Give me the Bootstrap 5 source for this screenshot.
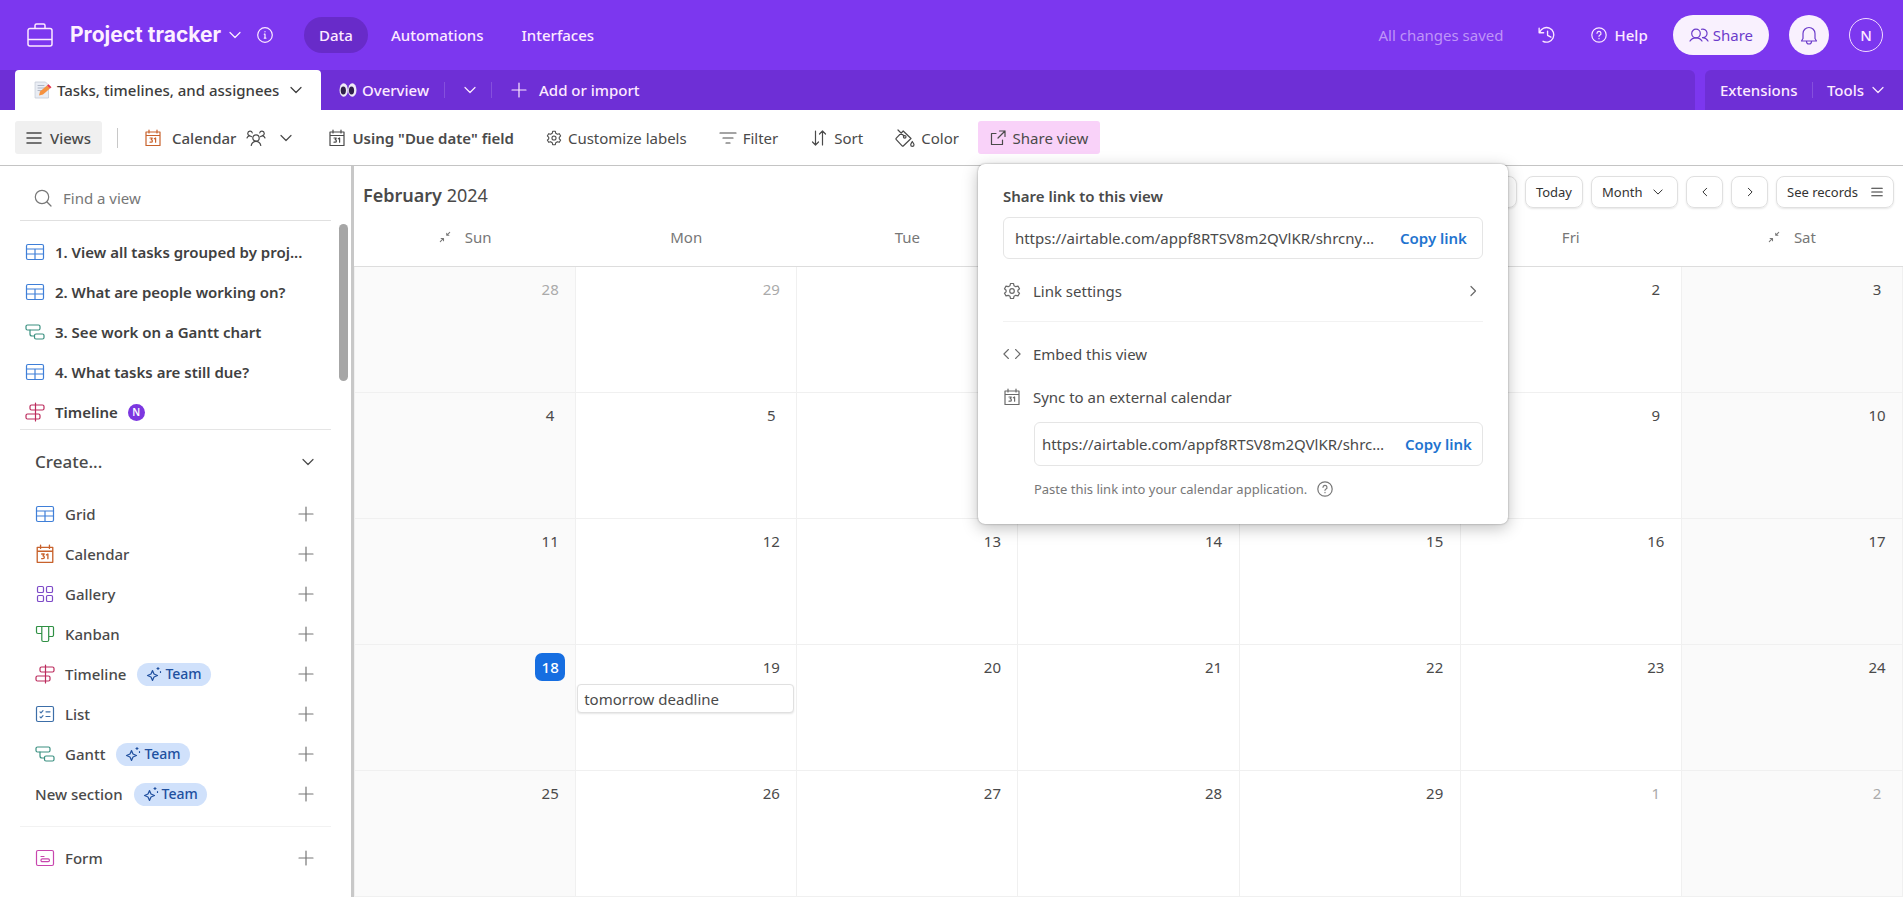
<!DOCTYPE html>
<html lang="en">
<head>
<meta charset="utf-8">
<meta name="viewport" content="width=device-width, initial-scale=1">
<title>Project tracker</title>
<link href="https://cdn.jsdelivr.net/npm/bootstrap@5.3.0/dist/css/bootstrap.min.css" rel="stylesheet">
<style>
body{font-family:"Noto Sans","Open Sans",sans-serif;font-size:15px;line-height:20px;color:#4a4a4a;background:#fff}
svg{fill:none;stroke:currentColor;stroke-width:1.2;stroke-linecap:round;stroke-linejoin:round;flex:none;display:block}
.i10{width:10px;height:10px}.i12{width:12px;height:12px}.i16{width:16px;height:16px}.i18{width:18px;height:18px}.i20{width:20px;height:20px}.i26{width:26px;height:26px}
a{color:inherit;text-decoration:none}
button{color:inherit;font:inherit;border:0;background:none;padding:0;white-space:nowrap;display:flex;align-items:center}
.fw5{font-weight:500}.fw6{font-weight:600}

/* header */
.topbar{height:70px;background:#7c37ef;color:#fdeaff;padding:0 20px 0 27px}
.base-name{font:700 21px/24px Inter,sans-serif;color:#fdf0ff;margin-left:17px}
.topnav{margin-left:31px}
.pill{height:36px;border-radius:18px;padding:0 15px}
.pill.on{background:#682bc9}
.saved{color:#bf94f8}
.hist{margin-left:34px}
.helpb{margin-left:35px}
.share-pill{height:40px;border-radius:20px;padding:0 16px;margin-left:25px;background:#f9f1fe;color:#6c3ccb}
.bell{width:40px;height:40px;margin-left:20px;border-radius:50%;background:#f9f1fe;color:#6c3ccb;justify-content:center}
.me{width:34px;height:34px;margin-left:20px;border-radius:50%;border:1px solid #f3dcff;justify-content:center}

/* table tabs */
.tabs{height:40px;background:#7c37ef;color:#fdeaff}
.tabs-a,.tabs-b{background:#6e2fd6}
.tabs-a{border-radius:0 6px 0 0;padding-left:15px}
.tabs-b{border-radius:6px 0 0 0;width:198px;margin-left:10px;padding:0 19px 0 15px}
.tab-on{background:#fff;color:#3c3c3c;border-radius:4px 4px 0 0;width:306px;padding:0 19px;gap:5px}
.vr1{width:1px;height:16px;background:#8550dd}
.over{margin-left:18px;gap:5px}
.v1{margin:0 19px 0 15px}
.addb{gap:12px}

/* toolbar */
.tools{height:56px;border-bottom:1px solid #c4c4c4;padding:0 15px}
.tbtn{height:33px;border-radius:3px}
.t-views{background:#f0f0f0;width:87px;justify-content:center}
.t-sep{width:1px;height:20px;background:#c8c8c8;margin:0 26px 0 15px}
.t-cal{gap:10px}
.t-using{margin-left:36px;gap:6px}
.t-opt{margin-left:32px;gap:6px}
.t-share{margin-left:19px}
.t-shareb{background:#f9d2f9;width:122px;justify-content:center;gap:7px}

/* share popover */
.pop{position:absolute;left:0;top:100%;margin-top:10px;width:530px;background:#fff;border-radius:7px;padding:22px 25px 25px;box-shadow:0 0 2px #00000060,0 4px 16px #00000040;z-index:5}
.p-title{margin-bottom:11px}
.linkbox{border:1px solid #e5e5e5;border-radius:6px;height:42px}
.linkbox input{border:0;outline:0;font:inherit;color:#4a4a4a;padding:0;min-width:0;flex:1 1 0;text-overflow:ellipsis;background:none}
.lb1{padding:0 15px 0 11px;gap:22px}
.lb2{height:44px;margin:4px 0 0 31px;padding:0 10px 0 7px;gap:13px}
.copy{color:#1f74cf;font-weight:600}
.prow{height:43px;gap:12px;width:100%}
.prow svg{color:#6a6a6a}
.p-set{margin-top:10px}
.p-hr{margin:9px 0 10px;border-color:#ccc}
.hint{margin:13px 0 0 31px;gap:10px;font-size:13px;color:#777}

/* views sidebar */
.side{width:354px;border-right:3px solid #c8c8c8}
.find{margin:0 20px;border-bottom:1px solid #e0e0e0;height:55px;padding:10px 14px 0 14px;gap:11px}
.find svg{color:#777}
.find input{border:0;outline:0;width:200px;font:inherit;padding:0;color:#555}
.find input::placeholder{color:#777;opacity:1}
.views{margin:0 20px;height:209px;border-bottom:1px solid #e5e5e5;padding:11px 0 0 5px;overflow:hidden;color:#404040}
.views a,.make button{height:40px;gap:10px;display:flex;align-items:center}
.thumb{position:absolute;right:3px;top:3px;width:9px;height:157px;border-radius:5px;background:#a6a6a6}
.nb{width:17px;height:17px;border-radius:50%;background:#7c37e0;color:#fff;font-size:10px;line-height:17px;text-align:center}
.make{padding:0 37px 0 35px}
.make button{width:100%}
.make .create{height:64px;font-size:17px}
.make .plus{color:#777;margin-left:auto}
.s-hr{margin:12px -17px 11px -15px;border-color:#ccc}
.team{height:23px;border-radius:12px;background:#d0e1fb;color:#20509f;font-size:14px;padding:0 9px;margin-left:1px;display:flex;align-items:center;gap:3px}
.bl{color:#3f7fd8}.or{color:#c8622c}.pu{color:#7d4ac8}.gr{color:#2f9044}.rd{color:#bc2a5c}.db{color:#3c6ea8}.te{color:#3a9080}.pk{color:#c846ae}

/* calendar */
.calhead{height:58px;padding:0 9px 0 9px}
.month-name{font-size:18px;line-height:24px}
.calbtns{padding-bottom:7px}
.cbtn{height:32px;border-radius:8px;border:1px solid #e0e0e0;box-shadow:0 1px 2px #0000001a;font-size:13px;color:#333;padding:0 10px}
.b-month{width:87px}
.b-arr{width:37px;justify-content:center}
.b-rec{width:118px}
table.cal{table-layout:fixed;width:100%;height:100%;border-collapse:collapse}
.cal th{height:42px;font-weight:400;color:#777;text-align:center;border-bottom:1px solid #ddd;padding:0 0 16px}
.wk{display:inline-flex;align-items:center;gap:14px}
.cal tbody tr{height:20%}
.cal td{border:1px solid #f0f0f0;vertical-align:top;padding:8px 2px 0 1px}
.cal td:first-child,.cal td:last-child{background:#fafafa}
.cal td.off{color:#aaa}
.dn{display:block;width:30px;height:28px;line-height:28px;border-radius:7px;margin:0 8px 0 auto;text-align:center}
.today{background:#166ee1;color:#fff}
.ev{border:1px solid #e0e0e0;border-radius:4px;box-shadow:0 1px 2px #0000001a;background:#fff;height:29px;padding:4px 6px;margin-top:3px}
</style>
</head>
<body>
<svg class="d-none" xmlns="http://www.w3.org/2000/svg">
<symbol id="case" viewBox="0 0 26 26"><path d="M3 6.500h20a2 2 0 0 1 2 2V22a2 2 0 0 1-2 2H3a2 2 0 0 1-2-2V8.500a2 2 0 0 1 2-2zM8 6V3.500A1.500 1.500 0 0 1 9.500 2h7A1.500 1.500 0 0 1 18 3.500V6M1 17.500h24" stroke-width="1.500"/></symbol>
<symbol id="chev" viewBox="0 0 12 12"><path d="M1 3.500l5 5 5-5"/></symbol>
<symbol id="next" viewBox="0 0 12 12"><path d="M4 1.500L8.500 6 4 10.500"/></symbol>
<symbol id="prev" viewBox="0 0 12 12"><path d="M8 1.500L3.500 6 8 10.500"/></symbol>
<symbol id="info" viewBox="0 0 16 16"><circle cx="8" cy="8" r="7.300"/><path d="M7.300 7.200H8v4M7.300 11.200h1.600M8 4.500v.3"/></symbol>
<symbol id="help" viewBox="0 0 16 16"><circle cx="8" cy="8" r="7.200"/><path d="M6 6.300a2 2 0 1 1 2.700 1.900c-.5.200-.7.500-.7 1.100M8 11.400v.3"/></symbol>
<symbol id="hist" viewBox="0 0 16 16"><path d="M1 2v4h4M1.500 5.500A6.500 6.500 0 1 1 4.500 13.600M8.500 4.500V8.300l3 1.600"/></symbol>
<symbol id="two" viewBox="0 0 20 16"><circle cx="7" cy="6.500" r="4.300"/><path d="M1 14c1.200-2 3.200-3.200 6-3.200s4.800 1.200 6 3.200M12.500 2.300a4.300 4.300 0 1 1 1 8.400c2.300 0 4.200 1.200 5.500 3.300"/></symbol>
<symbol id="bell" viewBox="0 0 18 20"><path d="M3 13.500V8.500a6 6 0 0 1 12 0v5l1.500 2.500h-15zM6.500 16.500a2.500 2.500 0 0 0 5 0"/></symbol>
<symbol id="plus" viewBox="0 0 16 16"><path d="M8 1v14M1 8h14"/></symbol>
<symbol id="menu" viewBox="0 0 16 16"><path d="M1 3h14M1 8h14M1 13h14" stroke-width="1.500"/></symbol>
<symbol id="cal" viewBox="0 0 18 18"><path d="M2 3h14v13.500H2zM2 6.500h14M5 1v3M13 1v3"/><path d="M6 9h2.300L7.200 10.700c1.600 0 1.600 2.500 0 2.500H6M10.300 9.800l1.300-.8v4.200"/></symbol>
<symbol id="group" viewBox="0 0 20 18"><circle cx="10" cy="9" r="3.200"/><path d="M5.200 16.500c.6-2.500 2.300-4.200 4.800-4.200s4.200 1.700 4.800 4.200M1 9c.4-1.300 1.200-2.200 2.500-2.200 1 0 1.500.4 2 .8M6.300 4A2.300 2.300 0 1 0 3.500 6.700M19 9c-.4-1.300-1.200-2.200-2.500-2.200-1 0-1.500.4-2 .8M13.700 4a2.300 2.300 0 1 1 2.800 2.700"/></symbol>
<symbol id="gear" viewBox="0 0 18 18"><circle cx="9" cy="9" r="2.300"/><path d="M7.500 1.500h3l.5 2.200 1.800 1 2.200-.6 1.500 2.600L14.900 8.200v1.700l1.600 1.400-1.500 2.600-2.200-.6-1.800 1-.5 2.200h-3L7 14.300l-1.800-1-2.200.6-1.500-2.600 1.600-1.400V8.200L1.500 6.700 3 4.100l2.200.6 1.800-1z"/></symbol>
<symbol id="filter" viewBox="0 0 18 16"><path d="M1 3h16M4 8h10M7 13h4"/></symbol>
<symbol id="sort" viewBox="0 0 16 18"><path d="M4.500 2v14M1.500 13l3 3 3-3M11.500 16V2M8.500 5l3-3 3 3"/></symbol>
<symbol id="bucket" viewBox="0 0 20 20"><path d="M3 2l6 6M8.200 3L16 10.500 8.500 17.800a1 1 0 0 1-1.400 0L1.300 11.600a1 1 0 0 1 0-1.400z"/><circle cx="9.700" cy="8.800" r="1.300"/><path d="M17.300 13.500c1 1.600 1.700 2.400 1.700 3.300a1.600 1.600 0 0 1-3.300 0c0-.9.700-1.700 1.600-3.300z"/></symbol>
<symbol id="ext" viewBox="0 0 16 16"><path d="M6 3.500H1.500v11h11V10M9.500 1H15v5.500M15 1L8 8"/></symbol>
<symbol id="find" viewBox="0 0 18 18"><circle cx="8" cy="8" r="6.700"/><path d="M13 13l4 4"/></symbol>
<symbol id="grid" viewBox="0 0 20 20"><rect x="1.500" y="2.500" width="17" height="15" rx="1.500"/><path d="M1.500 7h17M1.500 12h17M10 7v10.500"/></symbol>
<symbol id="gantt" viewBox="0 0 20 18"><rect x="1" y="2" width="14" height="5" rx="1.500"/><rect x="9.500" y="11" width="9.500" height="5" rx="1.500"/><path d="M5 7v4a2 2 0 0 0 2 2h2.500"/></symbol>
<symbol id="tline" viewBox="0 0 20 20"><path d="M10.500 1v18"/><rect x="5" y="3" width="14" height="5" rx="1.500"/><rect x="1" y="12" width="14" height="5" rx="1.500"/></symbol>
<symbol id="gal" viewBox="0 0 20 20"><rect x="2.500" y="2.500" width="6" height="6" rx="1.300"/><rect x="11.500" y="2.500" width="6" height="6" rx="1.300"/><rect x="2.500" y="11.500" width="6" height="6" rx="1.300"/><rect x="11.500" y="11.500" width="6" height="6" rx="1.300"/></symbol>
<symbol id="kan" viewBox="0 0 20 20"><path d="M2.500 2.500h15a1 1 0 0 1 1 1V11a1.500 1.500 0 0 1-1.500 1.500h-3.300V16a1.500 1.500 0 0 1-1.500 1.500H8.300A1.500 1.500 0 0 1 6.800 16V9.500H3A1.500 1.500 0 0 1 1.500 8V3.500a1 1 0 0 1 1-1zM6.800 9.500v-7M13.700 12.500v-10"/></symbol>
<symbol id="list" viewBox="0 0 20 20"><rect x="1.500" y="2.500" width="17" height="15" rx="1.500"/><path d="M5 7.800l1 1 2-2.200M5 12.800l1 1 2-2.200M11 7.800h4M11 12.500h4"/></symbol>
<symbol id="form" viewBox="0 0 20 20"><rect x="1.500" y="2.500" width="17" height="15" rx="1.500"/><path d="M6 8.500h3"/><rect x="6" y="10.800" width="8.400" height="2.800" rx="1.200"/></symbol>
<symbol id="spark" viewBox="0 0 16 16"><path d="M6.500 4.500L8 8l3.500 1.500L8 11l-1.500 3.500L5 11 1.500 9.500 5 8zM12 1.500v2M11 2.500h2M14.500 5.500v1"/></symbol>
<symbol id="code" viewBox="0 0 20 16"><path d="M6 3L1 8l5 5M14 3l5 5-5 5"/></symbol>
<symbol id="coll" viewBox="0 0 14 14"><path d="M1.500 12.500L5 9M2.500 8.700H5.300V11.500M12.500 1.500L9 5M9 2.500V5h2.500"/></symbol>
<symbol id="memo" viewBox="0 0 18 18"><path d="M1.500 1h10l3 3v13h-13z" fill="#e9edf4" stroke="#c3c9d6" stroke-width=".8"/><path d="M4 4.500h6M4 7h7M4 9.500h4" stroke="#a8b0c0" stroke-width=".9"/><path d="M5 14.500l1-4 7-6 3 3-7 6z" fill="#f59240" stroke="none"/><path d="M13 4.500l1.500-1.300 3 3L16 7.500z" fill="#e5354f" stroke="none"/></symbol>
<symbol id="eyes" viewBox="0 0 18 16"><g stroke="none"><ellipse cx="4.700" cy="8" rx="4.200" ry="6.800" fill="#efeaf6"/><ellipse cx="13.300" cy="8" rx="4.200" ry="6.800" fill="#efeaf6"/><ellipse cx="4.300" cy="8.500" rx="2.600" ry="4" fill="#30204a"/><ellipse cx="12.500" cy="8.500" rx="2.600" ry="4" fill="#30204a"/></g></symbol>
</svg>
<div class="vh-100 d-flex flex-column overflow-hidden">
<header class="topbar d-flex align-items-center flex-shrink-0">
  <svg class="i26"><use href="#case"/></svg>
  <button class="base-name gap-2">Project tracker <svg class="i12"><use href="#chev"/></svg></button>
  <button class="ms-3" aria-label="Base info"><svg class="i16"><use href="#info"/></svg></button>
  <nav class="d-flex gap-2 align-items-center topnav">
    <a class="pill on d-flex align-items-center fw5" href="#">Data</a>
    <a class="pill d-flex align-items-center fw5" href="#">Automations</a>
    <a class="pill d-flex align-items-center fw5" href="#">Interfaces</a>
  </nav>
  <div class="ms-auto d-flex align-items-center">
    <span class="saved">All changes saved</span>
    <button class="hist" aria-label="History"><svg class="i18"><use href="#hist"/></svg></button>
    <button class="helpb fw5 gap-2"><svg class="i16"><use href="#help"/></svg>Help</button>
    <button class="share-pill gap-1"><svg class="i20"><use href="#two"/></svg>Share</button>
    <button class="bell" aria-label="Notifications"><svg class="i20"><use href="#bell"/></svg></button>
    <button class="me fw5">N</button>
  </div>
</header>
<div class="tabs d-flex flex-shrink-0">
  <div class="tabs-a d-flex align-items-center flex-grow-1">
    <button class="tab-on fw5 h-100"><svg class="i18"><use href="#memo"/></svg>Tasks, timelines, and assignees<svg class="i12 ms-auto"><use href="#chev"/></svg></button>
    <button class="fw5 over"><svg class="i18"><use href="#eyes"/></svg>Overview</button>
    <span class="vr1 v1"></span>
    <button aria-label="More tables"><svg class="i12"><use href="#chev"/></svg></button>
    <span class="vr1 v1"></span>
    <button class="fw5 addb"><svg class="i16"><use href="#plus"/></svg>Add or import</button>
  </div>
  <div class="tabs-b d-flex align-items-center justify-content-between fw5">
    <button>Extensions</button><span class="vr1"></span><button class="gap-2">Tools <svg class="i12"><use href="#chev"/></svg></button>
  </div>
</div>
<div class="tools d-flex align-items-center flex-shrink-0" role="toolbar">
  <button class="tbtn fw5 gap-2 t-views"><svg class="i16"><use href="#menu"/></svg>Views</button>
  <span class="t-sep"></span>
  <button class="tbtn fw5 t-cal"><svg class="i18 or"><use href="#cal"/></svg><span>Calendar</span><svg class="i20"><use href="#group"/></svg><svg class="i12 ms-1"><use href="#chev"/></svg></button>
  <button class="tbtn fw6 t-using"><svg class="i18"><use href="#cal"/></svg>Using "Due date" field</button>
  <button class="tbtn t-opt"><svg class="i16"><use href="#gear"/></svg>Customize labels</button>
  <button class="tbtn t-opt"><svg class="i18"><use href="#filter"/></svg>Filter</button>
  <button class="tbtn t-opt"><svg class="i18"><use href="#sort"/></svg>Sort</button>
  <button class="tbtn t-opt"><svg class="i20"><use href="#bucket"/></svg>Color</button>
  <div class="position-relative t-share">
    <button class="tbtn t-shareb"><svg class="i16"><use href="#ext"/></svg>Share view</button>
    <div class="pop">
      <label class="fw6 d-block p-title" for="u1">Share link to this view</label>
      <div class="linkbox d-flex align-items-center lb1"><input id="u1" readonly value="https://airtable.com/appf8RTSV8m2QVlKR/shrcnyTq7Wm2"><button class="copy">Copy link</button></div>
      <button class="prow p-set"><svg class="i18"><use href="#gear"/></svg>Link settings<svg class="i12 ms-auto me-1"><use href="#next"/></svg></button>
      <hr class="p-hr">
      <button class="prow"><svg class="i18"><use href="#code"/></svg>Embed this view</button>
      <label class="prow d-flex align-items-center" for="u2"><svg class="i18"><use href="#cal"/></svg>Sync to an external calendar</label>
      <div class="linkbox d-flex align-items-center lb2"><input id="u2" readonly value="https://airtable.com/appf8RTSV8m2QVlKR/shrcnyTq7Wm2"><button class="copy">Copy link</button></div>
      <div class="hint d-flex align-items-center">Paste this link into your calendar application.<svg class="i16"><use href="#help"/></svg></div>
    </div>
  </div>
</div>
<div class="d-flex flex-grow-1 overflow-hidden">
<aside class="side flex-shrink-0">
  <label class="find d-flex align-items-center"><svg class="i18"><use href="#find"/></svg><input type="text" placeholder="Find a view" aria-label="Find a view"></label>
  <div class="position-relative">
  <nav class="views fw6">
    <a href="#"><svg class="i20 bl"><use href="#grid"/></svg>1. View all tasks grouped by proj...</a>
    <a href="#"><svg class="i20 bl"><use href="#grid"/></svg>2. What are people working on?</a>
    <a href="#"><svg class="i20 te"><use href="#gantt"/></svg>3. See work on a Gantt chart</a>
    <a href="#"><svg class="i20 bl"><use href="#grid"/></svg>4. What tasks are still due?</a>
    <a href="#"><svg class="i20 rd"><use href="#tline"/></svg>Timeline <span class="nb">N</span></a>
  </nav>
  <span class="thumb"></span>
  </div>
  <div class="make fw5">
    <button class="create justify-content-between"><span>Create...</span><svg class="i12"><use href="#chev"/></svg></button>
    <button><svg class="i20 bl"><use href="#grid"/></svg>Grid<svg class="i16 plus"><use href="#plus"/></svg></button>
    <button><svg class="i20 or"><use href="#cal"/></svg>Calendar<svg class="i16 plus"><use href="#plus"/></svg></button>
    <button><svg class="i20 pu"><use href="#gal"/></svg>Gallery<svg class="i16 plus"><use href="#plus"/></svg></button>
    <button><svg class="i20 gr"><use href="#kan"/></svg>Kanban<svg class="i16 plus"><use href="#plus"/></svg></button>
    <button><svg class="i20 rd"><use href="#tline"/></svg>Timeline<span class="team"><svg class="i16"><use href="#spark"/></svg>Team</span><svg class="i16 plus"><use href="#plus"/></svg></button>
    <button><svg class="i20 db"><use href="#list"/></svg>List<svg class="i16 plus"><use href="#plus"/></svg></button>
    <button><svg class="i20 te"><use href="#gantt"/></svg>Gantt<span class="team"><svg class="i16"><use href="#spark"/></svg>Team</span><svg class="i16 plus"><use href="#plus"/></svg></button>
    <button>New section<span class="team"><svg class="i16"><use href="#spark"/></svg>Team</span><svg class="i16 plus"><use href="#plus"/></svg></button>
    <hr class="s-hr">
    <button><svg class="i20 pk"><use href="#form"/></svg>Form<svg class="i16 plus"><use href="#plus"/></svg></button>
  </div>
</aside>
<main class="flex-grow-1 d-flex flex-column">
  <div class="calhead d-flex align-items-center flex-shrink-0">
    <div class="month-name"><span class="fw6">February</span> 2024</div>
    <div class="ms-auto d-flex gap-2 calbtns">
      <button class="cbtn b-arr" aria-label="Calendar options"></button>
      <button class="cbtn">Today</button>
      <button class="cbtn b-month justify-content-between">Month <svg class="i10 me-1"><use href="#chev"/></svg></button>
      <button class="cbtn b-arr" aria-label="Previous month"><svg class="i10"><use href="#prev"/></svg></button>
      <button class="cbtn b-arr" aria-label="Next month"><svg class="i10"><use href="#next"/></svg></button>
      <button class="cbtn b-rec justify-content-between">See records <svg class="i12"><use href="#menu"/></svg></button>
    </div>
  </div>
  <div class="flex-grow-1">
  <table class="cal">
    <thead><tr><th><span class="wk"><svg class="i12"><use href="#coll"/></svg>Sun</span></th><th>Mon</th><th>Tue</th><th>Wed</th><th>Thu</th><th>Fri</th><th><span class="wk"><svg class="i12"><use href="#coll"/></svg>Sat</span></th></tr></thead>
    <tbody>
    <tr><td class="off"><span class="dn">28</span></td><td class="off"><span class="dn">29</span></td><td class="off"><span class="dn">30</span></td><td class="off"><span class="dn">31</span></td><td><span class="dn">1</span></td><td><span class="dn">2</span></td><td><span class="dn">3</span></td></tr>
    <tr><td><span class="dn">4</span></td><td><span class="dn">5</span></td><td><span class="dn">6</span></td><td><span class="dn">7</span></td><td><span class="dn">8</span></td><td><span class="dn">9</span></td><td><span class="dn">10</span></td></tr>
    <tr><td><span class="dn">11</span></td><td><span class="dn">12</span></td><td><span class="dn">13</span></td><td><span class="dn">14</span></td><td><span class="dn">15</span></td><td><span class="dn">16</span></td><td><span class="dn">17</span></td></tr>
    <tr><td><span class="dn today fw5">18</span></td><td><span class="dn">19</span><div class="ev">tomorrow deadline</div></td><td><span class="dn">20</span></td><td><span class="dn">21</span></td><td><span class="dn">22</span></td><td><span class="dn">23</span></td><td><span class="dn">24</span></td></tr>
    <tr><td><span class="dn">25</span></td><td><span class="dn">26</span></td><td><span class="dn">27</span></td><td><span class="dn">28</span></td><td><span class="dn">29</span></td><td class="off"><span class="dn">1</span></td><td class="off"><span class="dn">2</span></td></tr>
    </tbody>
  </table>
  </div>
</main>
</div>
</div>
<script src="https://cdn.jsdelivr.net/npm/bootstrap@5.3.0/dist/js/bootstrap.bundle.min.js"></script>
</body>
</html>
